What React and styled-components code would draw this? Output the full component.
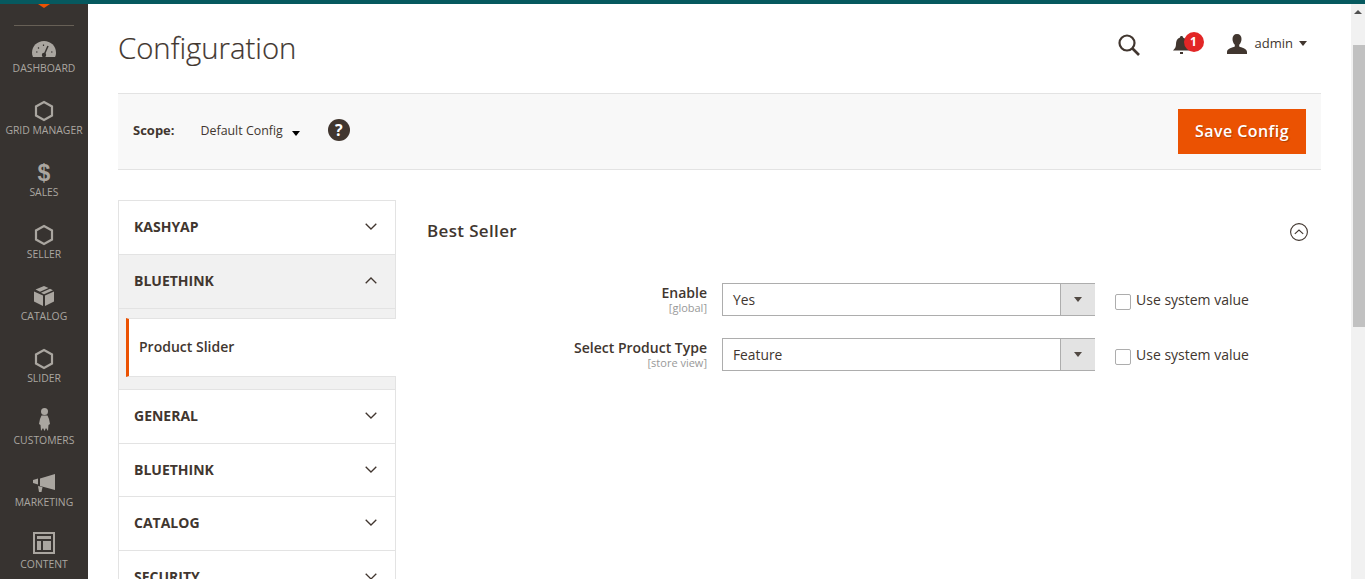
import React from 'react';
import styled, { createGlobalStyle } from 'styled-components';

const GlobalStyle = createGlobalStyle`
  html, body {
    margin: 0;
    padding: 0;
    height: 579px;
    overflow: hidden;
    background: #fff;
    font-family: "Open Sans", "Liberation Sans", sans-serif;
    color: #41362f;
  }
  * { box-sizing: border-box; }
`;

const Page = styled.div`
  width: 1365px;
  height: 579px;
  display: flex;
  flex-direction: column;
  overflow: hidden;
`;
const TopStrip = styled.div`
  height: 4px;
  flex: none;
  background: #06595f;
`;
const Body = styled.div`
  flex: 1;
  min-height: 0;
  display: flex;
`;

const Sidebar = styled.nav`
  width: 88px;
  flex: none;
  background: #373330;
  display: flex;
  flex-direction: column;
  align-items: center;
  overflow: hidden;
`;
const LogoTip = styled.svg`
  display: block;
  width: 12px;
  height: 4px;
  flex: none;
`;
const SideRule = styled.div`
  width: 60px;
  height: 1px;
  flex: none;
  margin: 17px 0 6px;
  background: #676056;
`;
const SideItem = styled.a`
  width: 100%;
  height: 62px;
  flex: none;
  display: flex;
  flex-direction: column;
  align-items: center;
`;
const IconSlot = styled.div`
  height: 28px;
  flex: none;
  display: flex;
  align-items: center;
  justify-content: center;
  margin-top: ${(p) => 3 - (p.$lift || 0)}px;
  margin-bottom: ${(p) => p.$lift || 0}px;
  svg { display: block; }
`;
const SideLabel = styled.span`
  font-size: 10.4px;
  line-height: 14px;
  margin-top: -2px;
  white-space: nowrap;
  color: #aaa6a0;
  text-transform: uppercase;
`;
const DollarGlyph = styled.span`
  font-family: "Liberation Sans", sans-serif;
  font-weight: 700;
  font-size: 23px;
  line-height: 28px;
  color: #aaa6a0;
`;

const Main = styled.main`
  flex: 1;
  min-width: 0;
  padding: 0 30px;
  display: flex;
  flex-direction: column;
`;
const Header = styled.header`
  height: 89px;
  flex: none;
  display: flex;
  justify-content: space-between;
  padding-top: 23px;
`;
const Title = styled.h1`
  margin: 0;
  font-size: 29.3px;
  line-height: 42px;
  font-weight: 300;
  -webkit-text-stroke: 0.2px #41362f;
  color: #41362f;
`;
const HeaderActions = styled.div`
  display: flex;
  align-items: flex-start;
  padding: 7px 14px 0 0;
`;
const IconButton = styled.div`
  position: relative;
  display: flex;
  margin-right: ${(p) => p.$gap}px;
  margin-top: ${(p) => p.$top || 0}px;
`;
const Badge = styled.span`
  position: absolute;
  left: 11px;
  top: -4px;
  width: 20px;
  height: 20px;
  border-radius: 50%;
  background: #e22626;
  color: #fff;
  font-size: 12px;
  font-weight: 700;
  line-height: 20px;
  text-align: center;
`;
const AdminName = styled.span`
  font-size: 13px;
  line-height: 18px;
  margin: 0 6px 0 8px;
  color: #41362f;
`;
const Caret = styled.span`
  display: block;
  width: 0;
  height: 0;
  margin-top: ${(p) => p.$top || 0}px;
  border-left: ${(p) => p.$w || 4}px solid transparent;
  border-right: ${(p) => p.$w || 4}px solid transparent;
  border-top: ${(p) => p.$h || 5}px solid ${(p) => p.$color || '#41362f'};
`;

const ScopeBar = styled.section`
  height: 77px;
  flex: none;
  display: flex;
  align-items: center;
  padding: 0 15px;
  background: #f8f8f8;
  border-top: 1px solid #e3e3e3;
  border-bottom: 1px solid #e3e3e3;
`;
const ScopeLabel = styled.span`
  font-size: 13px;
  font-weight: 700;
  color: #41362f;
  margin: -3px 26px 0 0;
`;
const ScopeValue = styled.span`
  font-size: 12.4px;
  color: #41362f;
  margin: -3px 9px 0 0;
`;
const HelpCircle = styled.span`
  width: 22px;
  height: 22px;
  border-radius: 50%;
  background: #41362f;
  color: #fff;
  font-size: 16px;
  font-weight: 700;
  line-height: 22px;
  text-align: center;
  margin: -3px 0 0 28px;
`;
const SaveButton = styled.button`
  margin-left: auto;
  width: 128px;
  height: 45px;
  border: 0;
  padding: 0 0 2px;
  background: #eb5202;
  color: #fff;
  font-family: inherit;
  font-size: 16px;
  font-weight: 600;
  letter-spacing: 0.45px;
  text-shadow: 1px 1px 1px rgba(0, 0, 0, 0.25);
`;

const Columns = styled.div`
  flex: 1;
  min-height: 0;
  display: flex;
  padding-top: 30px;
`;
const ConfigNav = styled.aside`
  width: 278px;
  flex: none;
  border: 1px solid #e3e3e3;
  border-bottom: 0;
  align-self: flex-start;
`;
const NavHead = styled.div`
  height: ${(p) => p.$h || 54}px;
  display: flex;
  align-items: center;
  justify-content: space-between;
  padding: 0 18px 2px 15px;
  background: ${(p) => (p.$open ? '#f1f1f1' : '#fff')};
  border-bottom: 1px solid #e3e3e3;
  font-size: 14px;
  font-weight: 700;
  color: #41362f;
  text-transform: uppercase;
`;
const SubPanel = styled.div`
  background: #f1f1f1;
  padding: 9px 0 12px 7px;
  border-bottom: 1px solid #e3e3e3;
`;
const SubItem = styled.div`
  height: 59px;
  display: flex;
  align-items: center;
  padding: 0 0 2px 10px;
  margin-right: -1px;
  background: #fff;
  border-left: 3px solid #eb5202;
  border-top: 1px solid #e3e3e3;
  border-bottom: 1px solid #e3e3e3;
  font-size: 14px;
  font-weight: 600;
  color: #41362f;
`;

const Content = styled.section`
  flex: 1;
  min-width: 0;
  padding-left: 31px;
`;
const SectionHead = styled.div`
  height: 62px;
  display: flex;
  align-items: center;
  justify-content: space-between;
  padding-right: 13px;
`;
const SectionTitle = styled.h2`
  margin: -2px 0 0;
  font-size: 17px;
  font-weight: 600;
  letter-spacing: 0.35px;
  color: #41362f;
`;
const CollapseIcon = styled.svg`
  display: block;
  margin-top: 2px;
`;
const FormRows = styled.div`
  padding-top: 21px;
  display: flex;
  flex-direction: column;
  gap: 22px;
`;
const FormRow = styled.div`
  display: grid;
  grid-template-columns: 280px 373px auto;
  column-gap: 15px;
  align-items: start;
`;
const LabelCell = styled.div`
  text-align: right;
`;
const FieldLabel = styled.div`
  font-size: 14px;
  line-height: 19px;
  font-weight: 600;
  color: #41362f;
`;
const ScopeHint = styled.div`
  font-size: 11px;
  line-height: 12px;
  color: #999;
`;
const Select = styled.div`
  height: 33px;
  display: flex;
  align-items: stretch;
  border: 1px solid #adadad;
  font-size: 13.8px;
  color: #41362f;
`;
const SelectValue = styled.span`
  flex: 1;
  padding-left: 10px;
  line-height: 32px;
`;
const SelectArrow = styled.span`
  width: 35px;
  flex: none;
  display: flex;
  align-items: center;
  justify-content: center;
  margin-left: 1px;
  margin-right: -1px;
  background: #e3e3e3;
  border-left: 1px solid #adadad;
`;
const SystemValue = styled.label`
  display: flex;
  align-items: flex-start;
  margin-left: 5px;
  font-size: 14px;
  line-height: 19px;
  color: #41362f;
  padding-top: 7px;
`;
const Checkbox = styled.span`
  width: 16px;
  height: 16px;
  margin: 4px 5px 0 0;
  background: #fff;
  border: 1px solid #adadad;
  border-radius: 2px;
`;

const Scrollbar = styled.div`
  width: 14px;
  flex: none;
  background: #f1f1f1;
  display: flex;
  flex-direction: column;
  align-items: flex-end;
  padding-top: 6px;
`;
const ScrollArrow = styled.span`
  display: block;
  width: 0;
  height: 0;
  align-self: center;
  border-left: 4px solid transparent;
  border-right: 4px solid transparent;
  border-bottom: 4px solid #505050;
`;
const ScrollThumb = styled.div`
  width: 12px;
  height: 282px;
  margin-top: 31px;
  background: #c1c1c1;
`;

const GRAY = '#aaa6a0';

const HexIcon = () => (
  <svg width="20" height="22" viewBox="0 0 20 22">
    <path d="M10 2l8 4.500v9L10 20l-8-4.500v-9z" fill="none" stroke={GRAY} strokeWidth="2.200" />
  </svg>
);

const menu = [
  {
    label: 'Dashboard',
    icon: (
      <svg width="24" height="18" viewBox="0 0 24 18">
        <path d="M1 17C.2 15.500 0 14 0 12.500 0 6 5.400 1 12 1s12 5 12 11.500c0 1.500-.2 3-1 4.500z" fill={GRAY} />
        <path d="M12 15l4-9" stroke="#373330" strokeWidth="1.500" />
        <circle cx="12" cy="15" r="2.200" fill="#373330" />
        <path d="M4 12h1.500M6 7.500l1 1M11.500 4.500v1.500M19 12h1.500" stroke="#373330" strokeWidth="1.200" />
      </svg>
    ),
  },
  { label: 'Grid Manager', icon: <HexIcon /> },
  { label: 'Sales', icon: <DollarGlyph>$</DollarGlyph> },
  { label: 'Seller', icon: <HexIcon /> },
  {
    label: 'Catalog',
    lift: 1,
    icon: (
      <svg width="20" height="20" viewBox="0 0 20 20">
        <path d="M10 0l4.500 2-8.500 3.700L1.500 3.500z" fill={GRAY} />
        <path d="M16 2.800l3 1.500-9 4-3-1.500z" fill={GRAY} />
        <path d="M0 5.500l9 4V20l-9-4.500zM20 5.500V15.500L11 20V9.500z" fill={GRAY} />
      </svg>
    ),
  },
  { label: 'Slider', icon: <HexIcon /> },
  {
    label: 'Customers',
    lift: 2,
    icon: (
      <svg width="11" height="23" viewBox="0 0 11 23">
        <circle cx="5.500" cy="3.500" r="3.500" fill={GRAY} />
        <path d="M2.500 7.500h6L10 11l1 5-1.500 1-.5 6-2-3-1.500 3-1.500-3-2 3-.5-6L0 16l1-5z" fill={GRAY} />
      </svg>
    ),
  },
  {
    label: 'Marketing',
    icon: (
      <svg width="22" height="18" viewBox="0 0 22 18">
        <path d="M22 0v16L9 12.500 7 12V4.500z" fill={GRAY} />
        <path d="M0 6l5-1.500v6L0 9z" fill={GRAY} />
        <path d="M5 12l4.500 1-1 5H6z" fill={GRAY} />
      </svg>
    ),
  },
  {
    label: 'Content',
    lift: 2,
    icon: (
      <svg width="22" height="22" viewBox="0 0 22 22">
        <path d="M0 0h22v22H0zM2 2v18h18V2z" fill={GRAY} fillRule="evenodd" />
        <path d="M4 4h14v3H4zM4 9h4v9H4zM10 9h8v9h-8z" fill={GRAY} />
      </svg>
    ),
  },
];

const Chevron = ({ up }) => (
  <svg width="12" height="7" viewBox="0 0 12 7">
    <path d={up ? 'M.7 6.300L6 1l5.300 5.300' : 'M.7.700L6 6l5.300-5.300'} fill="none" stroke="#41362f" strokeWidth="1.300" />
  </svg>
);

const fields = [
  { label: 'Enable', scope: '[global]', value: 'Yes' },
  { label: 'Select Product Type', scope: '[store view]', value: 'Feature' },
];

export default function App() {
  return (
    <Page>
      <GlobalStyle />
      <TopStrip />
      <Body>
        <Sidebar>
          <LogoTip viewBox="0 0 12 4">
            <path d="M0 0h12L6 4z" fill="#eb5202" />
          </LogoTip>
          <SideRule />
          {menu.map((m) => (
            <SideItem key={m.label}>
              <IconSlot $lift={m.lift}>{m.icon}</IconSlot>
              <SideLabel>{m.label}</SideLabel>
            </SideItem>
          ))}
        </Sidebar>
        <Main>
          <Header>
            <Title>Configuration</Title>
            <HeaderActions>
              <IconButton $gap={33}>
                <svg width="22" height="22" viewBox="0 0 22 22">
                  <circle cx="9" cy="9" r="7.500" fill="none" stroke="#41362f" strokeWidth="2.200" />
                  <path d="M14.500 14.500L21 21" stroke="#41362f" strokeWidth="2.600" />
                </svg>
              </IconButton>
              <IconButton $gap={37} $top={2}>
                <svg width="17" height="18" viewBox="0 0 17 18">
                  <path d="M8.500 0c1 0 1.500.6 1.500 1.400C13 2.200 14 5 14 8c0 3 1 4.500 3 6.500H0C2 12.500 3 11 3 8c0-3 1-5.800 4-6.600C7 .6 7.500 0 8.500 0z" fill="#41362f" />
                  <path d="M7 16h3v2H7z" fill="#41362f" />
                </svg>
                <Badge>1</Badge>
              </IconButton>
              <IconButton $gap={0}>
                <svg width="20" height="20" viewBox="0 0 20 20">
                  <path d="M10 0c3 0 4.500 2 4.500 5 0 2.500-1 4.500-2.300 5.700v1.800c2 1 7.800 2 7.800 5.500v2H0v-2c0-3.500 5.800-4.500 7.800-5.500v-1.800C6.500 9.500 5.500 7.500 5.500 5 5.500 2 7 0 10 0z" fill="#41362f" />
                </svg>
              </IconButton>
              <AdminName>admin</AdminName>
              <Caret $w={4.500} $h={5} $top={7} />
            </HeaderActions>
          </Header>
          <ScopeBar>
            <ScopeLabel>Scope:</ScopeLabel>
            <ScopeValue>Default Config</ScopeValue>
            <Caret $w={4.500} $h={5} $top={3} $color="#000" />
            <HelpCircle>?</HelpCircle>
            <SaveButton>Save Config</SaveButton>
          </ScopeBar>
          <Columns>
            <ConfigNav>
              <NavHead>KASHYAP<Chevron /></NavHead>
              <NavHead $open>BLUETHINK<Chevron up /></NavHead>
              <SubPanel>
                <SubItem>Product Slider</SubItem>
              </SubPanel>
              <NavHead>GENERAL<Chevron /></NavHead>
              <NavHead $h={53}>BLUETHINK<Chevron /></NavHead>
              <NavHead>CATALOG<Chevron /></NavHead>
              <NavHead>SECURITY<Chevron /></NavHead>
            </ConfigNav>
            <Content>
              <SectionHead>
                <SectionTitle>Best Seller</SectionTitle>
                <CollapseIcon width="18" height="18" viewBox="0 0 18 18">
                  <circle cx="9" cy="9" r="8.400" fill="none" stroke="#41362f" strokeWidth="1.100" />
                  <path d="M4.800 10.800L9 7l4.200 3.800" fill="none" stroke="#41362f" strokeWidth="1.100" />
                </CollapseIcon>
              </SectionHead>
              <FormRows>
                {fields.map((f) => (
                  <FormRow key={f.label}>
                    <LabelCell>
                      <FieldLabel>{f.label}</FieldLabel>
                      <ScopeHint>{f.scope}</ScopeHint>
                    </LabelCell>
                    <Select>
                      <SelectValue>{f.value}</SelectValue>
                      <SelectArrow><Caret $w={4.500} $h={5} $color="#514943" /></SelectArrow>
                    </Select>
                    <SystemValue>
                      <Checkbox />
                      Use system value
                    </SystemValue>
                  </FormRow>
                ))}
              </FormRows>
            </Content>
          </Columns>
        </Main>
        <Scrollbar>
          <ScrollArrow />
          <ScrollThumb />
        </Scrollbar>
      </Body>
    </Page>
  );
}
